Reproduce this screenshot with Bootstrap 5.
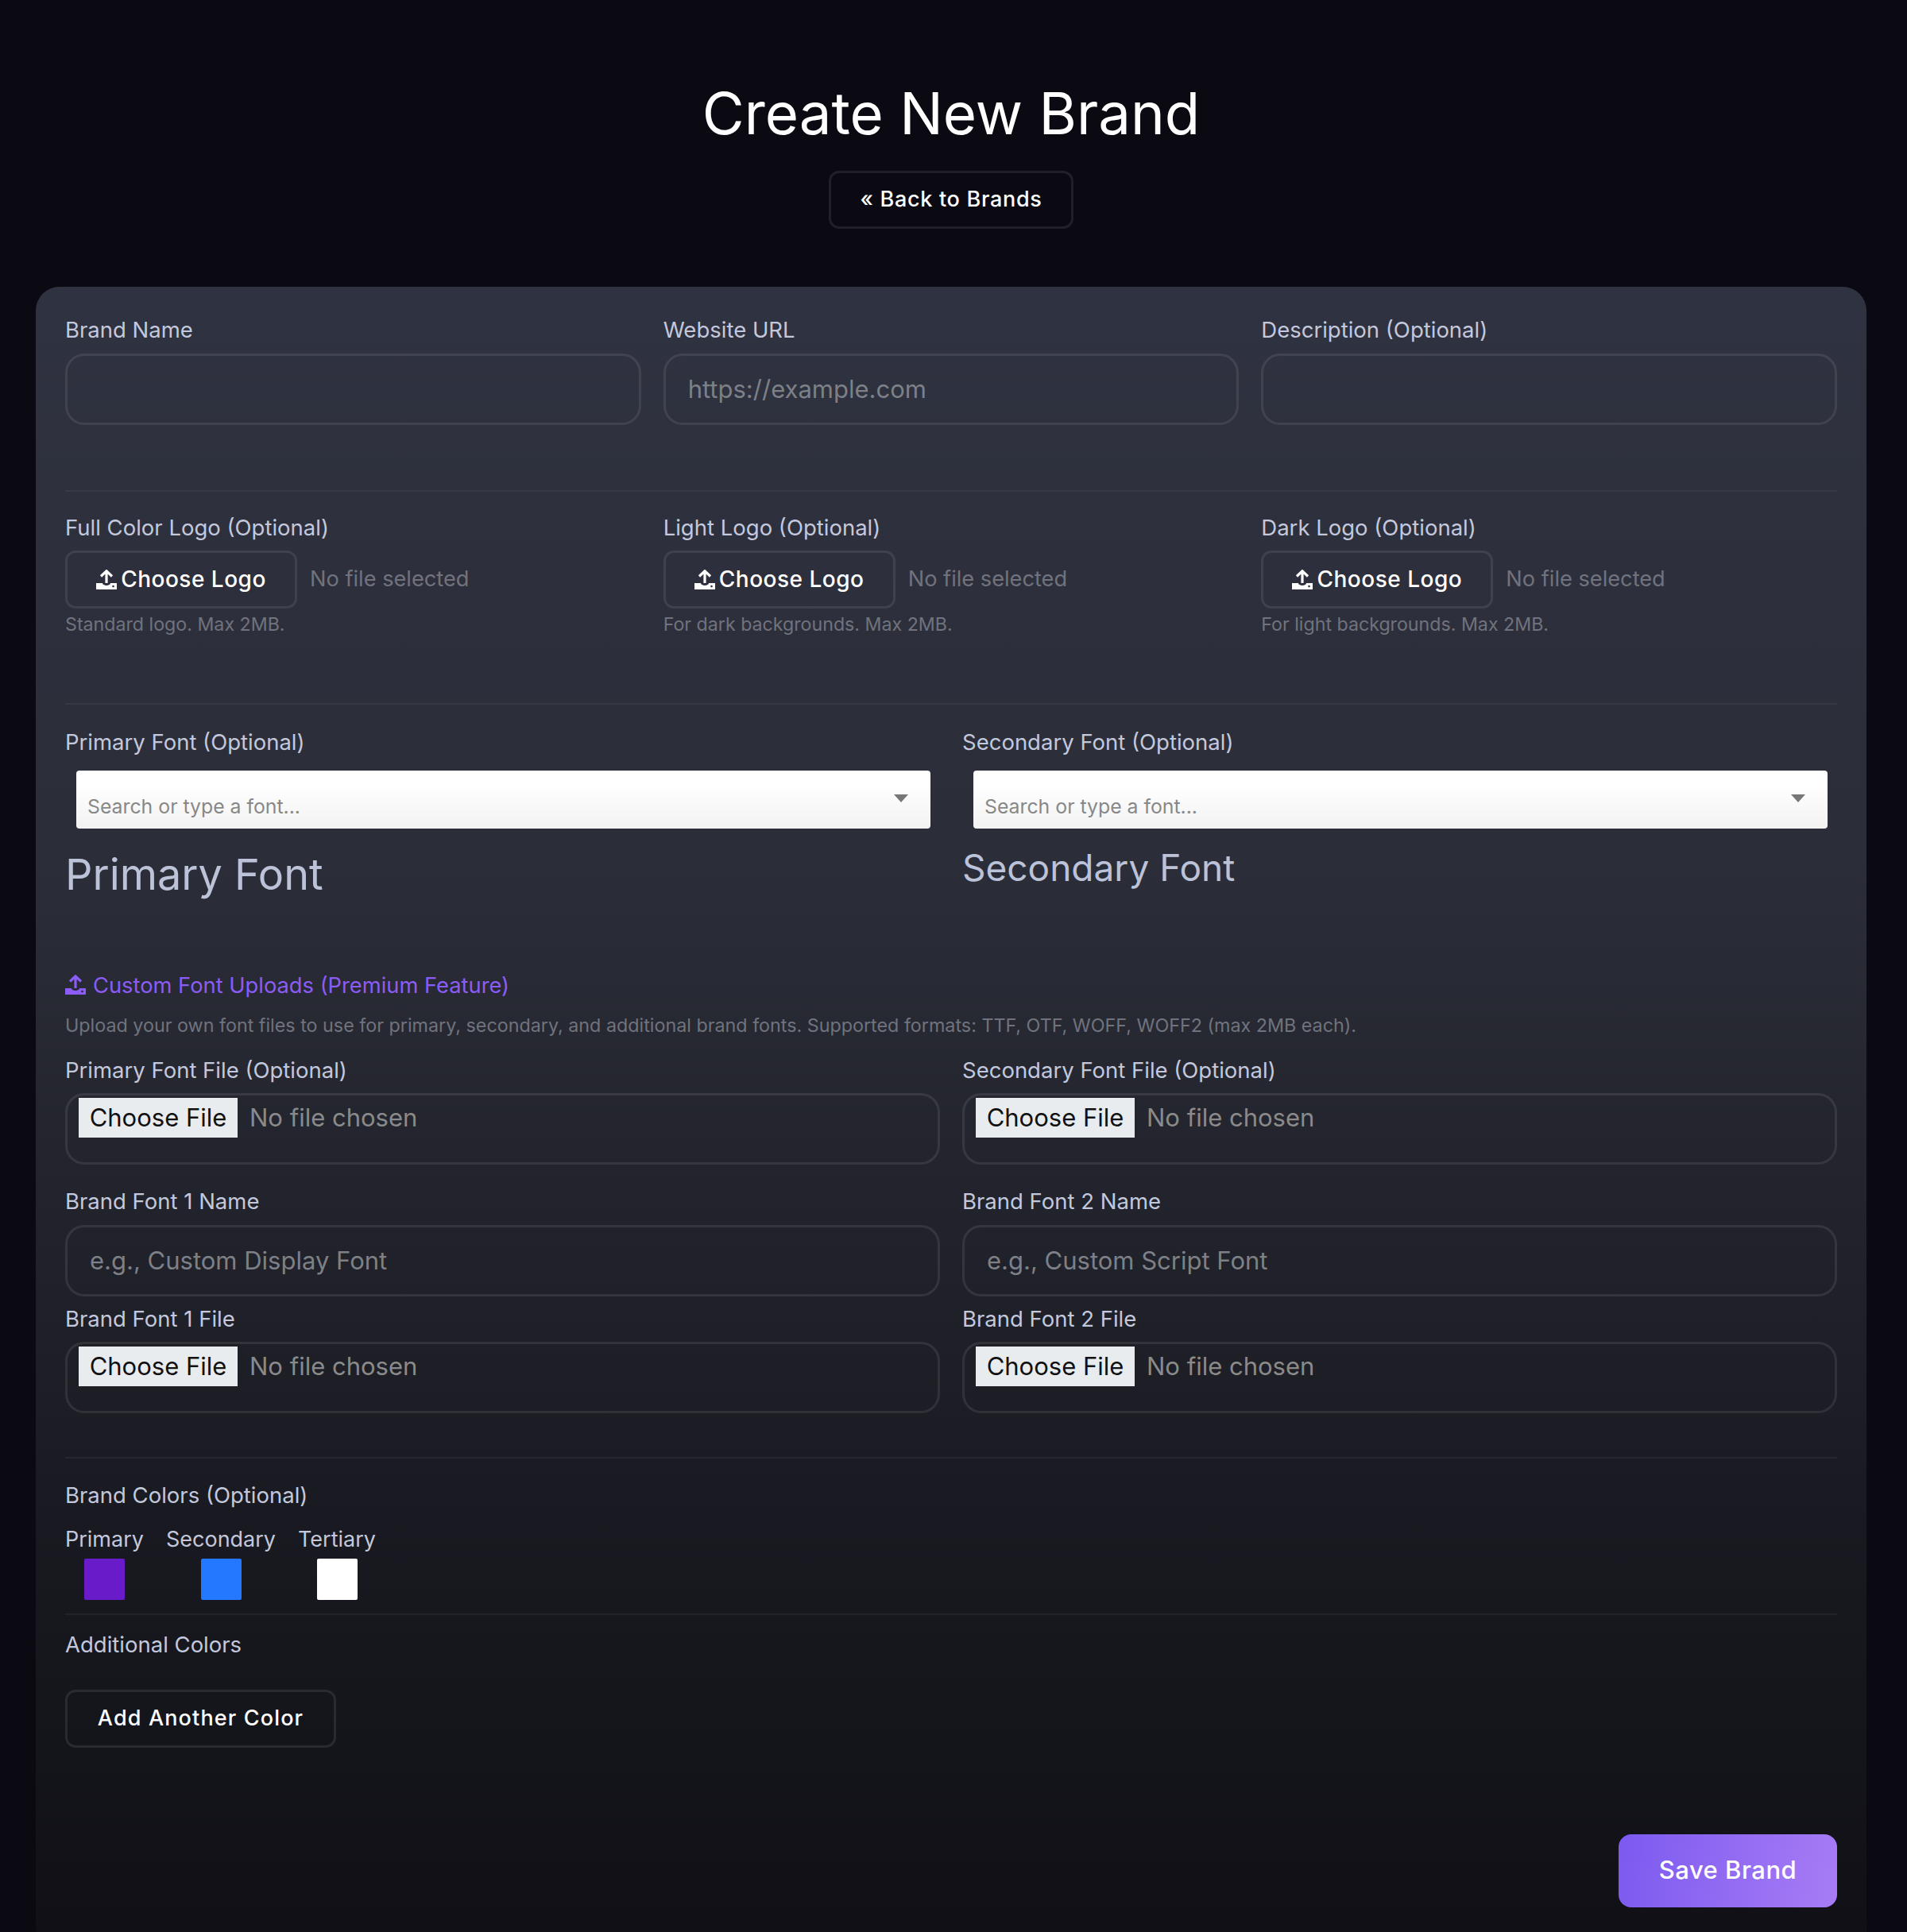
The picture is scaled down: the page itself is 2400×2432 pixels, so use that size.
<!DOCTYPE html>
<html lang="en">
<head>
<meta charset="utf-8">
<title>Create New Brand</title>
<link href="https://cdn.jsdelivr.net/npm/bootstrap@5.3.0/dist/css/bootstrap.min.css" rel="stylesheet">
<style>
html,body{background:#0b0a13;}
body{font-family:Inter,"Liberation Sans",sans-serif;color:#fff;height:2432px;overflow:hidden;padding-right:6px;}
.page-title{font-size:72.5px;font-weight:400;line-height:1;margin:0;padding-top:107px;text-align:center;color:#fff;}
.ghost-btn{display:inline-flex;align-items:center;justify-content:center;gap:5px;height:73px;padding:0 36px;border:3px solid rgba(255,255,255,.09);border-radius:13px;background:transparent;color:#fff;font-size:27px;font-weight:500;letter-spacing:.7px;text-decoration:none;}
.panel{margin:73px 0 0 45px;width:2304px;height:2071px;padding:36px 37px 0 37px;border:0;border-radius:30px 30px 0 0;background:linear-gradient(180deg,#2f3240 0,#2b2d38 35%,#191a21 75%,#101016 100%);}
.cols{--bs-gutter-x:28px;--bs-gutter-y:0;}
.lbl{display:block;font-size:27.5px;line-height:36px;color:#c3c8dc;margin-bottom:11px;}
.lbl-top{margin-bottom:12px;}
.lbl-logo{margin-bottom:11px;}
.lbl-font{margin-bottom:18px;}
.txt-in{display:block;width:100%;height:90px;padding:0 28px;border:3px solid rgba(255,255,255,.09);border-radius:24px;background:rgba(255,255,255,.002);color:#fff;font-family:inherit;font-size:31px;}
.txt-in::placeholder{color:#7d8087;opacity:1;}
.sep{border-top:2px solid rgba(255,255,255,.05);}
.none-txt{font-size:27.2px;color:#70737d;margin-left:16px;}
.hint{font-size:23.2px;color:#70737d;line-height:32px;margin-top:4px;}
.logo-btn{width:292px;padding:0;font-size:28px;letter-spacing:.5px;}
.logo-btn svg{width:26px;height:25px;flex:none;}
.font-pick{display:flex;justify-content:space-between;margin:0 12px 0 14px;height:73px;padding:0 28px 0 14px;background:linear-gradient(180deg,#fff 0,#fff 25%,#f2f2f2 100%);border-radius:4px;}
.font-pick span:first-child{color:#888;font-size:24.8px;line-height:90px;}
.arrow-dn{width:0;height:0;margin-top:30px;border:9px solid transparent;border-top:10px solid #777;border-bottom:0;}
.preview-a{font-size:54px;line-height:64px;color:#bcc2d8;margin-top:26px;}
.preview-b{font-size:46px;line-height:56px;color:#bcc2d8;margin-top:21px;}
.prem{display:flex;align-items:center;gap:9px;font-size:27.3px;line-height:36px;color:#8b5cf6;}
.prem svg{width:26px;height:25px;margin-top:-2px;}
.prem-note{font-size:23.3px;line-height:32px;color:#70737d;margin-top:16px;}
.file-in{display:block;width:100%;height:90px;padding:3px 14px;border:3px solid rgba(255,255,255,.09);border-radius:24px;background:rgba(255,255,255,.002);color:#8a8a8a;font-family:inherit;font-size:31px;line-height:50px;}
.file-in::file-selector-button{height:50px;width:200px;margin-right:15px;padding:0;border:0;background:#e9ecef;color:#111;font-family:inherit;font-size:31px;}
.sw-label{font-size:27px;line-height:36px;color:#c3c8dc;text-align:center;}
.sw{display:block;width:51px;height:52px;margin:6px auto 0;border-radius:2px;}
.sw-a{background:#6a1bc9;}.sw-b{background:#2478ff;}.sw-c{background:#fff;}
.add-btn{width:341px;padding:0;letter-spacing:1.15px;}
.save-btn{display:flex;align-items:center;justify-content:center;width:275px;height:92px;margin-left:auto;border:0;border-radius:16px;background:linear-gradient(100deg,#7c5af0,#a87cf5);color:#fff;font-size:31px;font-weight:500;letter-spacing:.5px;}
</style>
</head>
<body>
<h1 class="page-title">Create New Brand</h1>
<div class="text-center" style="margin-top:35px"><a class="ghost-btn" href="#">« Back to Brands</a></div>
<form class="panel" onsubmit="return false">
  <div class="row cols" style="padding-bottom:82px">
    <div class="col-4"><label class="lbl lbl-top">Brand Name</label><input class="txt-in" type="text"></div>
    <div class="col-4"><label class="lbl lbl-top">Website URL</label><input class="txt-in" type="text" placeholder="https://example.com"></div>
    <div class="col-4"><label class="lbl lbl-top">Description (Optional)</label><input class="txt-in" type="text"></div>
  </div>
  <div class="sep"></div>
  <div class="row cols" style="padding-top:27px;height:266px">
    <div class="col-4"><label class="lbl lbl-logo">Full Color Logo (Optional)</label>
      <div class="d-flex align-items-center"><button class="ghost-btn logo-btn" type="button"><svg viewBox="0 0 26 25"><path fill="none" stroke="currentColor" stroke-width="3.2" d="M6 8.5L13 1.8L20 8.5M13 2V17"/><path fill="currentColor" fill-rule="evenodd" d="M0 17h8a5 3 0 0 0 10 0h8v8H0zM21.5 19.7a1.3 1.3 0 1 0 .01 0z"/></svg>Choose Logo</button><span class="none-txt">No file selected</span></div>
      <div class="hint">Standard logo. Max 2MB.</div></div>
    <div class="col-4"><label class="lbl lbl-logo">Light Logo (Optional)</label>
      <div class="d-flex align-items-center"><button class="ghost-btn logo-btn" type="button"><svg viewBox="0 0 26 25"><path fill="none" stroke="currentColor" stroke-width="3.2" d="M6 8.5L13 1.8L20 8.5M13 2V17"/><path fill="currentColor" fill-rule="evenodd" d="M0 17h8a5 3 0 0 0 10 0h8v8H0zM21.5 19.7a1.3 1.3 0 1 0 .01 0z"/></svg>Choose Logo</button><span class="none-txt">No file selected</span></div>
      <div class="hint">For dark backgrounds. Max 2MB.</div></div>
    <div class="col-4"><label class="lbl lbl-logo">Dark Logo (Optional)</label>
      <div class="d-flex align-items-center"><button class="ghost-btn logo-btn" type="button"><svg viewBox="0 0 26 25"><path fill="none" stroke="currentColor" stroke-width="3.2" d="M6 8.5L13 1.8L20 8.5M13 2V17"/><path fill="currentColor" fill-rule="evenodd" d="M0 17h8a5 3 0 0 0 10 0h8v8H0zM21.5 19.7a1.3 1.3 0 1 0 .01 0z"/></svg>Choose Logo</button><span class="none-txt">No file selected</span></div>
      <div class="hint">For light backgrounds. Max 2MB.</div></div>
  </div>
  <div class="sep"></div>
  <div class="row cols" style="padding-top:29px;height:336px">
    <div class="col-6"><label class="lbl lbl-font">Primary Font (Optional)</label>
      <div class="font-pick"><span>Search or type a font...</span><span class="arrow-dn"></span></div>
      <div class="preview-a">Primary Font</div></div>
    <div class="col-6"><label class="lbl lbl-font">Secondary Font (Optional)</label>
      <div class="font-pick"><span>Search or type a font...</span><span class="arrow-dn"></span></div>
      <div class="preview-b">Secondary Font</div></div>
  </div>
  <div class="prem"><svg viewBox="0 0 26 25"><path fill="none" stroke="currentColor" stroke-width="3.2" d="M6 8.5L13 1.8L20 8.5M13 2V17"/><path fill="currentColor" fill-rule="evenodd" d="M0 17h8a5 3 0 0 0 10 0h8v8H0zM21.5 19.7a1.3 1.3 0 1 0 .01 0z"/></svg>Custom Font Uploads (Premium Feature)</div>
  <div class="prem-note">Upload your own font files to use for primary, secondary, and additional brand fonts. Supported formats: TTF, OTF, WOFF, WOFF2 (max 2MB each).</div>
  <div class="row cols" style="margin-top:22px">
    <div class="col-6"><label class="lbl">Primary Font File (Optional)</label><input class="file-in" type="file"></div>
    <div class="col-6"><label class="lbl">Secondary Font File (Optional)</label><input class="file-in" type="file"></div>
  </div>
  <div class="row cols" style="margin-top:28px">
    <div class="col-6"><label class="lbl lbl-top">Brand Font 1 Name</label><input class="txt-in" type="text" placeholder="e.g., Custom Display Font"></div>
    <div class="col-6"><label class="lbl lbl-top">Brand Font 2 Name</label><input class="txt-in" type="text" placeholder="e.g., Custom Script Font"></div>
  </div>
  <div class="row cols" style="margin-top:10px">
    <div class="col-6"><label class="lbl">Brand Font 1 File</label><input class="file-in" type="file"></div>
    <div class="col-6"><label class="lbl">Brand Font 2 File</label><input class="file-in" type="file"></div>
  </div>
  <div class="sep" style="margin-top:55px"></div>
  <div class="lbl" style="margin:28px 0 20px">Brand Colors (Optional)</div>
  <div class="d-flex" style="gap:28px">
    <div><div class="sw-label">Primary</div><span class="sw sw-a"></span></div>
    <div><div class="sw-label">Secondary</div><span class="sw sw-b"></span></div>
    <div><div class="sw-label">Tertiary</div><span class="sw sw-c"></span></div>
  </div>
  <div class="sep" style="margin-top:17px"></div>
  <div class="lbl" style="margin:19px 0 39px">Additional Colors</div>
  <button class="ghost-btn add-btn" type="button">Add Another Color</button>
  <button class="save-btn" type="submit" style="margin-top:109px">Save Brand</button>
</form>
<script src="https://cdn.jsdelivr.net/npm/bootstrap@5.3.0/dist/js/bootstrap.bundle.min.js"></script>
</body>
</html>
